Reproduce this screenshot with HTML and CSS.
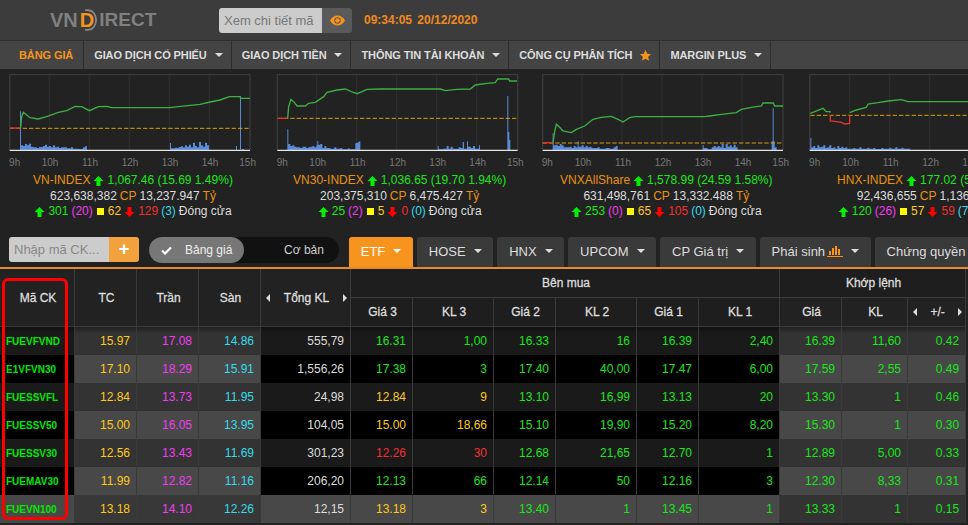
FILE: index.html
```html
<!DOCTYPE html>
<html lang="vi">
<head>
<meta charset="utf-8">
<title>VNDIRECT - Bảng giá</title>
<link rel="stylesheet" href="styles.css">
</head>
<body>
<header class="topbar">
  <div class="logo">
    <span>VN</span><span class="logo-d">D<svg class="logo-arc" viewBox="0 0 14 20"><path d="M3 1h2c5 0 8 4 8 9s-3 9-8 9H3" fill="none" stroke="#8a8a8a" stroke-width="1.6"/></svg></span><span class="logo-rest">IRECT</span>
  </div>
  <div class="lookup">
    <span class="lookup-text">Xem chi tiết mã</span>
    <span class="lookup-btn"><svg width="15" height="11" viewBox="0 0 15 11"><path d="M0 5.5C2 2 4.500 .5 7.500 .5S13 2 15 5.500C13 9 10.500 10.500 7.500 10.500S2 9 0 5.500Z" fill="#f7941d"/><circle cx="7.500" cy="5.500" r="3.200" fill="#5a5a5a"/><circle cx="7.500" cy="5.500" r="2.200" fill="#f7941d"/></svg></span>
  </div>
  <div class="clock">09:34:05 20/12/2020</div>
</header>

<nav class="mainnav">
  <a class="nav-item nav-active">BẢNG GIÁ</a>
  <a class="nav-item">GIAO DỊCH CỔ PHIẾU <i class="caret"></i></a>
  <a class="nav-item">GIAO DỊCH TIỀN <i class="caret"></i></a>
  <a class="nav-item">THÔNG TIN TÀI KHOẢN <i class="caret"></i></a>
  <a class="nav-item">CÔNG CỤ PHÂN TÍCH <svg class="star" width="11" height="11" viewBox="0 0 24 24"><path d="M12 0l3.700 8 8.300 1-6.100 5.700 1.600 8.800L12 19l-7.500 4.500 1.600-8.800L0 9l8.300-1z" fill="#f7941d"/></svg></a>
  <a class="nav-item">MARGIN PLUS <i class="caret"></i></a>
</nav>

<section class="indices">
  <article class="index">
    <svg class="chart" viewBox="27 12 726 282">
      <path class="frame" d="M29 241V14H750V241"/>
      <path class="grid" d="M148 14V241M268 14V241M388 14V241M508 14V241M628 14V241"/>
      <path class="bars" d="M60 240V124h3V226h6V228h6V222h6V226h6V221h6V230h6V232h12V234h6V231h12V228h6V224h6V230h6V228h6V232h6V226h6V232h6V230h6V234h6V232h18V235h12V232h6V236h18V237h12V232h6V229h6V240H510V219h3V235h12V233h12V231h6V229h6V232h6V226h6V230h6V224h6V232h6V218h6V228h6V232h6V216h6V226h6V230h6V218h6V226h6V240H708V228h3V240H720V78h3V240H726V237h6V240Z"/>
      <path class="dash" d="M30 175H750"/>
      <path class="line-r" d="M30 174H62"/>
      <path class="line-g" d="M62 174L65 140L70 127L80 135L90 143L115 147L140 140L175 127L200 122L225 109L245 110L268 122L295 110L320 109L335 113H510L535 110L600 103L630 96L660 90L688 80H720L722 85H750"/>
      <path class="base" d="M29 241H750"/>
      <g class="ticks"><text x="44" y="288">9h</text><text x="150" y="288">10h</text><text x="270" y="288">11h</text><text x="390" y="288">12h</text><text x="510" y="288">13h</text><text x="630" y="288">14h</text><text x="743" y="288">15h</text></g>
    </svg>
    <div class="stats">
      <p><span class="o">VN-INDEX</span> <svg class="ar" viewBox="0 0 10 10"><path class="up" d="M5 0l5 5H7v5H3V5H0z"/></svg> <span class="g">1,067.46 (15.69 1.49%)</span></p>
      <p><span class="w">623,638,382</span> <span class="o">CP</span> <span class="w">13,237.947</span> <span class="o">Tỷ</span></p>
      <p><svg class="ar" viewBox="0 0 10 10"><path class="up" d="M5 0l5 5H7v5H3V5H0z"/></svg> <span class="g">301</span> <span class="m">(20)</span> <i class="sq"></i> <span class="y">62</span> <svg class="ar" viewBox="0 0 10 10"><path class="dn" d="M5 10L0 5h3V0h4v5h3z"/></svg> <span class="r">129</span> <span class="c">(3)</span> <span class="w">Đóng cửa</span></p>
    </div>
  </article>

  <article class="index">
    <svg class="chart" viewBox="17 12 726 282">
      <path class="frame" d="M21 241V14H742V241"/>
      <path class="grid" d="M139 14V241M259 14V241M379 14V241M499 14V241M619 14V241"/>
      <path class="bars" d="M51 240V178h3V222h6V228h6V226h6V230h6V232h12V234h6V230h12V234h6V232h6V230h6V228h6V232h6V226h3V213h3V224h6V222h6V234h6V228h6V234h12V236h12V232h6V236h12V234h6V238h18V234h3V238h18V220h4V218h4V216h4V214h3V240H502V228h3V238h12V236h12V228h6V236h6V230h6V236h18V232h6V234h6V216h4V236h9V214h3V230h9V234h6V228h6V236h12V226h3V240H711V78h3V186h3V210h3V240Z"/>
      <path class="dash" d="M22 145H742"/>
      <path class="line-r" d="M22 145H52"/>
      <path class="line-g" d="M52 145L55 110L62 88L70 95L80 108H105L115 100L135 97L160 80L170 67L200 60L225 57L245 66L260 71L275 65L290 58L330 57H510L525 62L560 58L600 57L615 45L650 40L675 38L682 27H715L718 33H740"/>
      <path class="base" d="M21 241H742"/>
      <g class="ticks"><text x="36" y="288">9h</text><text x="142" y="288">10h</text><text x="262" y="288">11h</text><text x="382" y="288">12h</text><text x="502" y="288">13h</text><text x="622" y="288">14h</text><text x="735" y="288">15h</text></g>
    </svg>
    <div class="stats">
      <p><span class="o">VN30-INDEX</span> <svg class="ar" viewBox="0 0 10 10"><path class="up" d="M5 0l5 5H7v5H3V5H0z"/></svg> <span class="g">1,036.65 (19.70 1.94%)</span></p>
      <p><span class="w">203,375,310</span> <span class="o">CP</span> <span class="w">6,475.427</span> <span class="o">Tỷ</span></p>
      <p><svg class="ar" viewBox="0 0 10 10"><path class="up" d="M5 0l5 5H7v5H3V5H0z"/></svg> <span class="g">25</span> <span class="m">(2)</span> <i class="sq"></i> <span class="y">5</span> <svg class="ar" viewBox="0 0 10 10"><path class="dn" d="M5 10L0 5h3V0h4v5h3z"/></svg> <span class="r">0</span> <span class="c">(0)</span> <span class="w">Đóng cửa</span></p>
    </div>
  </article>

  <article class="index">
    <svg class="chart" viewBox="22 12 726 282">
      <path class="frame" d="M24 241V14H745V241"/>
      <path class="grid" d="M142 14V241M262 14V241M382 14V241M502 14V241M622 14V241"/>
      <path class="bars" d="M54 240V190h3V226h6V224h6V228h6V222h6V226h6V232h18V230h6V234h6V228h6V232h6V214h3V230h9V226h6V232h6V228h6V232h6V230h6V234h18V232h6V236h18V234h12V236h12V232h6V228h6V240H504V226h3V234h12V238h12V232h6V228h6V232h6V228h6V232h6V222h6V234h6V222h6V230h6V226h6V232h6V224h6V232h6V240H711V214h3V115h3V214h3V232h6V240Z"/>
      <path class="dash" d="M24 219H745"/>
      <path class="line-r" d="M24 218H55"/>
      <path class="line-g" d="M55 218L60 185L65 163L75 172L85 183L110 188L125 178L150 168L175 148L200 142L230 139L250 148L265 156L285 143L300 140H510L525 138L560 133L605 128L620 118L650 112L680 108L685 99H716L720 108H745"/>
      <path class="base" d="M24 241H745"/>
      <g class="ticks"><text x="38" y="288">9h</text><text x="145" y="288">10h</text><text x="265" y="288">11h</text><text x="385" y="288">12h</text><text x="505" y="288">13h</text><text x="625" y="288">14h</text><text x="738" y="288">15h</text></g>
    </svg>
    <div class="stats">
      <p><span class="o">VNXAllShare</span> <svg class="ar" viewBox="0 0 10 10"><path class="up" d="M5 0l5 5H7v5H3V5H0z"/></svg> <span class="g">1,578.99 (24.59 1.58%)</span></p>
      <p><span class="w">631,498,761</span> <span class="o">CP</span> <span class="w">13,332.488</span> <span class="o">Tỷ</span></p>
      <p><svg class="ar" viewBox="0 0 10 10"><path class="up" d="M5 0l5 5H7v5H3V5H0z"/></svg> <span class="g">253</span> <span class="m">(0)</span> <i class="sq"></i> <span class="y">65</span> <svg class="ar" viewBox="0 0 10 10"><path class="dn" d="M5 10L0 5h3V0h4v5h3z"/></svg> <span class="r">105</span> <span class="c">(0)</span> <span class="w">Đóng cửa</span></p>
    </div>
  </article>

  <article class="index">
    <svg class="chart" viewBox="33 12 726 282">
      <path class="frame" d="M35 241V14H756V241"/>
      <path class="grid" d="M155 14V241M275 14V241M395 14V241M515 14V241M635 14V241"/>
      <path class="bars" d="M37 240V204h3V232h6V228h6V234h6V226h6V232h6V230h6V226h6V234h6V232h6V226h6V234h6V232h6V236h6V228h6V234h6V230h6V234h6V232h6V236h18V234h6V236h12V232h6V236h18V233h6V236h12V234h6V237h18V234h6V236h18V233h6V236h12V232h6V236h12V233h6V236H337V240Z"/>
      <path class="dash" d="M37 136H756"/>
      <path class="line-g" d="M37 130L50 125L75 115L85 125H96V128"/>
      <path class="line-r" d="M97 136V153L115 155L130 157L140 162L155 160V136"/>
      <path class="line-g" d="M155 128L175 120L205 112L210 102L240 98L270 93L310 89L330 95H756"/>
      <path class="base" d="M35 241H756"/>
      <g class="ticks"><text x="50" y="288">9h</text><text x="158" y="288">10h</text><text x="278" y="288">11h</text><text x="398" y="288">12h</text><text x="518" y="288">13h</text></g>
    </svg>
    <div class="stats">
      <p><span class="o">HNX-INDEX</span> <svg class="ar" viewBox="0 0 10 10"><path class="up" d="M5 0l5 5H7v5H3V5H0z"/></svg> <span class="g">177.02 (5.28 3.07%)</span></p>
      <p><span class="w">92,436,655</span> <span class="o">CP</span> <span class="w">1,136.412</span> <span class="o">Tỷ</span></p>
      <p><svg class="ar" viewBox="0 0 10 10"><path class="up" d="M5 0l5 5H7v5H3V5H0z"/></svg> <span class="g">120</span> <span class="m">(26)</span> <i class="sq"></i> <span class="y">57</span> <svg class="ar" viewBox="0 0 10 10"><path class="dn" d="M5 10L0 5h3V0h4v5h3z"/></svg> <span class="r">59</span> <span class="c">(7)</span> <span class="w">Đóng cửa</span></p>
    </div>
  </article>
</section>

<section class="toolbar">
  <div class="code-box">
    <span class="code-input">Nhập mã CK...</span>
    <span class="code-add">+</span>
  </div>
  <div class="toggle">
    <span class="toggle-on"><svg width="11" height="9" viewBox="0 0 11 9"><path d="M1 4.500L4 7.500L10 1.500" fill="none" stroke="#fff" stroke-width="2.200"/></svg><b>Bảng giá</b></span>
    <span class="toggle-off">Cơ bản</span>
  </div>
  <div class="tabs">
    <a class="tab tab-active">ETF <i class="caret caret-w"></i></a>
    <a class="tab">HOSE <i class="caret"></i></a>
    <a class="tab">HNX <i class="caret"></i></a>
    <a class="tab">UPCOM <i class="caret"></i></a>
    <a class="tab">CP Giá trị <i class="caret"></i></a>
    <a class="tab">Phái sinh <svg class="bars-ic" width="16" height="12" viewBox="0 0 16 12"><path d="M2 6h2v4H2zM5 3h2v7H5zM8 1h2v9H8zM11 4h2v6h-2z" fill="#f7941d"/><path d="M0 11.500H16" stroke="#f7941d"/></svg> <i class="caret"></i></a>
    <a class="tab">Chứng quyền <i class="caret"></i></a>
  </div>
</section>

<main class="board">
  <table class="prices">
    <colgroup>
      <col class="c75"><col class="c62"><col class="c62"><col class="c62"><col class="c90"><col class="c62"><col class="c81"><col class="c62"><col class="c81"><col class="c62"><col class="c81"><col class="c62"><col class="c66"><col class="c58">
    </colgroup>
    <thead>
      <tr>
        <th rowspan="2">Mã CK</th>
        <th rowspan="2">TC</th>
        <th rowspan="2">Trần</th>
        <th rowspan="2">Sàn</th>
        <th rowspan="2"><span class="arrows"><i class="tri-l"></i>Tổng KL<i class="tri-r"></i></span></th>
        <th colspan="6" class="band">Bên mua</th>
        <th colspan="3" class="band">Khớp lệnh</th>
      </tr>
      <tr>
        <th>Giá 3</th><th>KL 3</th><th>Giá 2</th><th>KL 2</th><th>Giá 1</th><th>KL 1</th><th>Giá</th><th>KL</th>
        <th><span class="arrows"><i class="tri-l"></i>+/-<i class="tri-r"></i></span></th>
      </tr>
    </thead>
    <tbody>
      <tr><td class="sym">FUEVFVND</td><td class="ref y">15.97</td><td class="ref m">17.08</td><td class="ref c">14.86</td><td class="w">555,79</td><td class="g">16.31</td><td class="g">1,00</td><td class="g">16.33</td><td class="g">16</td><td class="g">16.39</td><td class="g">2,40</td><td class="ref g">16.39</td><td class="ref g">11,60</td><td class="ref g">0.42</td></tr>
      <tr><td class="sym">E1VFVN30</td><td class="ref y">17.10</td><td class="ref m">18.29</td><td class="ref c">15.91</td><td class="w">1,556,26</td><td class="g">17.38</td><td class="g">3</td><td class="g">17.40</td><td class="g">40,00</td><td class="g">17.47</td><td class="g">6,00</td><td class="ref g">17.59</td><td class="ref g">2,55</td><td class="ref g">0.49</td></tr>
      <tr><td class="sym">FUESSVFL</td><td class="ref y">12.84</td><td class="ref m">13.73</td><td class="ref c">11.95</td><td class="w">24,98</td><td class="y">12.84</td><td class="y">9</td><td class="g">13.10</td><td class="g">16,99</td><td class="g">13.13</td><td class="g">20</td><td class="ref g">13.30</td><td class="ref g">1</td><td class="ref g">0.46</td></tr>
      <tr><td class="sym">FUESSV50</td><td class="ref y">15.00</td><td class="ref m">16.05</td><td class="ref c">13.95</td><td class="w">104,05</td><td class="y">15.00</td><td class="y">18,66</td><td class="g">15.10</td><td class="g">19,90</td><td class="g">15.20</td><td class="g">8,20</td><td class="ref g">15.30</td><td class="ref g">1</td><td class="ref g">0.30</td></tr>
      <tr><td class="sym">FUESSV30</td><td class="ref y">12.56</td><td class="ref m">13.43</td><td class="ref c">11.69</td><td class="w">301,23</td><td class="r">12.26</td><td class="r">30</td><td class="g">12.68</td><td class="g">21,65</td><td class="g">12.70</td><td class="g">1</td><td class="ref g">12.89</td><td class="ref g">5,00</td><td class="ref g">0.33</td></tr>
      <tr><td class="sym">FUEMAV30</td><td class="ref y">11.99</td><td class="ref m">12.82</td><td class="ref c">11.16</td><td class="w">206,20</td><td class="g">12.13</td><td class="g">66</td><td class="g">12.14</td><td class="g">50</td><td class="g">12.16</td><td class="g">3</td><td class="ref g">12.30</td><td class="ref g">8,33</td><td class="ref g">0.31</td></tr>
      <tr class="hover"><td class="sym">FUEVN100</td><td class="ref y">13.18</td><td class="ref m">14.10</td><td class="ref c">12.26</td><td class="w">12,15</td><td class="y">13.18</td><td class="y">3</td><td class="g">13.40</td><td class="g">1</td><td class="g">13.45</td><td class="g">1</td><td class="ref g">13.33</td><td class="ref g">1</td><td class="ref g">0.15</td></tr>
    </tbody>
  </table>
  <div class="highlight"></div>
</main>
</body>
</html>
```

FILE: styles.css
```css
* { box-sizing: border-box; }
html, body { margin: 0; height: 525px; overflow: hidden; }
body {
  width: 968px;
  background: #222;
  color: #ddd;
  font: 12px "Liberation Sans", Arial, sans-serif;
  position: relative;
}
p { margin: 0; }
i { font-style: normal; }

/* top bar */
.topbar {
  height: 40px;
  background: #3c3c3c;
  display: flex;
  align-items: center;
}
.logo {
  flex: none;
  width: 219px;
  padding-left: 50px;
  display: flex;
  color: #808080;
  font-size: 20px;
  line-height: 24px;
  font-weight: bold;
}
.logo-d {
  color: #f7941d;
  position: relative;
  margin: 0 5px 0 2px;
}
.logo-arc {
  position: absolute;
  left: 0;
  top: 1px;
  width: 19px;
  height: 22px;
}
.logo-rest { font-size: 19px; }
.lookup {
  flex: none;
  width: 133px;
  height: 25px;
  display: flex;
  border-radius: 3px;
  overflow: hidden;
}
.lookup-text {
  width: 103px;
  background: #ccc;
  color: #777;
  font-size: 13px;
  line-height: 25px;
  padding-left: 5px;
  white-space: nowrap;
}
.lookup-btn {
  width: 30px;
  background: #5a5a5a;
  display: flex;
  align-items: center;
  justify-content: center;
}
.clock {
  margin-left: 12px;
  color: #f08a1d;
  font-weight: bold;
  font-size: 12px;
  word-spacing: 2px;
  white-space: nowrap;
}

/* navigation */
.mainnav {
  height: 30px;
  background: #444;
  border-top: 1px solid #2e2e2e;
  border-bottom: 1px solid #222;
  display: flex;
}
.nav-item {
  display: flex;
  align-items: center;
  gap: 5px;
  padding: 0 8px 0 10px;
  border-right: 1px solid #2e2e2e;
  font-size: 11px;
  font-weight: bold;
  letter-spacing: -.1px;
  color: #ddd;
  white-space: nowrap;
}
.nav-active { color: #f7941d; padding: 0 10px 0 19px; }
.caret {
  display: inline-block;
  flex: none;
  width: 0;
  height: 0;
  margin-left: 3px;
  border-left: 4px solid transparent;
  border-right: 4px solid transparent;
  border-top: 4px solid #ddd;
}
.caret-w { border-top-color: #fff; }
.star { margin-left: 3px; }

/* index charts */
.indices {
  height: 163px;
  padding: 4px 0 0 9px;
  display: flex;
  overflow: hidden;
}
.index {
  flex: 0 0 266.67px;
}
.chart {
  display: block;
  width: 242px;
  height: 94px;
  overflow: visible;
}
.frame { fill: none; stroke: #3a3a3a; stroke-width: 4; }
.grid { fill: none; stroke: #363636; stroke-width: 2; }
.bars { fill: #5b8ad6; }
.dash { fill: none; stroke: #d8a208; stroke-width: 3; stroke-dasharray: 13 6; }
.line-g { fill: none; stroke: #3cb043; stroke-width: 4; }
.line-r { fill: none; stroke: #e8322e; stroke-width: 4; }
.base { fill: none; stroke: #e4e4e4; stroke-width: 4; }
.ticks text { fill: #777; font-size: 30px; text-anchor: middle; }

.stats {
  width: 242px;
  margin: 5px 0 0 3px;
  white-space: nowrap;
  line-height: 15.5px;
}
.stats p { display: flex; justify-content: center; gap: 3px; align-items: center; }
.ar { width: 11px; height: 10px; flex: none; }
.up { fill: #00f000; }
.dn { fill: #f00; }
.sq { width: 7px; height: 7px; margin: 0 1px; background: #ff0; flex: none; }
.o { color: #e8920c; }
.g { color: #19e619; }
.w { color: #ddd; }
.m { color: #f23cf2; }
.y { color: #ffc916; }
.r { color: #f03030; }
.c { color: #35dcea; }

/* toolbar */
.toolbar {
  height: 36px;
  padding: 4px 0 0 9px;
  display: flex;
  align-items: flex-start;
  border-bottom: 2px solid #e8892c;
  overflow: hidden;
}
.code-box {
  flex: none;
  width: 130px;
  height: 25px;
  display: flex;
  border-radius: 3px;
  overflow: hidden;
}
.code-input {
  width: 100px;
  background: #ccc;
  color: #888;
  font-size: 13px;
  line-height: 25px;
  padding-left: 5px;
  white-space: nowrap;
}
.code-add {
  width: 30px;
  background: #f2a23c;
  color: #fff;
  font-size: 19px;
  font-weight: bold;
  line-height: 24px;
  text-align: center;
}
.toggle {
  flex: none;
  width: 190px;
  height: 26px;
  margin-left: 10px;
  border-radius: 13px;
  background: #111;
  display: flex;
  align-items: center;
}
.toggle-on {
  width: 95px;
  height: 26px;
  border-radius: 13px;
  background: #777;
  display: flex;
  align-items: center;
  padding-left: 12px;
  gap: 13px;
  color: #eee;
}
.toggle-on b { font-weight: normal; }
.toggle-off {
  flex: 1;
  padding-left: 25px;
  text-align: center;
  color: #ccc;
}
.tabs {
  flex: none;
  margin-left: 10px;
  display: flex;
  gap: 4px;
}
.tab {
  height: 30px;
  padding: 0 11.75px 2px;
  border-radius: 3px 3px 0 0;
  background: #3a3a3a;
  color: #ddd;
  font-size: 13px;
  display: flex;
  align-items: center;
  gap: 5px;
  white-space: nowrap;
}
.tab-active { background: #f7941d; color: #fff; }
.bars-ic { flex: none; margin-left: -3px; }

/* price table */
.board { position: relative; }
.prices {
  width: 966px;
  table-layout: fixed;
  border-collapse: separate;
  border-spacing: 0;
}
.c75 { width: 75px; }
.c62 { width: 62px; }
.c90 { width: 90px; }
.c81 { width: 81px; }
.c66 { width: 66px; }
.c58 { width: 58px; }
.prices th {
  height: 29px;
  background: #222;
  border-right: 1px solid #3a3a3a;
  border-bottom: 1px solid #3a3a3a;
  font-size: 12px;
  font-weight: normal;
  -webkit-text-stroke: .3px #ddd;
  color: #ddd;
  padding: 0 0 0 2px;
}
.prices th.band { background: #1e1e1e; }
.prices thead tr + tr th { background: #1e1e1e; }
.prices thead tr + tr th:nth-child(n+7) { background: #222; }
.arrows {
  display: flex;
  align-items: center;
  justify-content: space-between;
  padding: 0 3px;
}
.tri-l, .tri-r {
  width: 0;
  height: 0;
  border-top: 4px solid transparent;
  border-bottom: 4px solid transparent;
}
.tri-l { border-right: 4px solid #ddd; }
.tri-r { border-left: 4px solid #ddd; }
.prices td {
  height: 28px;
  padding: 0 6px;
  text-align: right;
  font-size: 12px;
  background: #1a1a1a;
  border-right: 1px solid #3a3a3a;
  white-space: nowrap;
}
.prices tr:nth-child(even) td { background: #000; }
.prices tr td.ref { background: #333; }
.prices tr:nth-child(even) td.ref { background: #484848; }
.prices tbody tr:first-child td {
  background-image: linear-gradient(rgba(0, 0, 0, .35), transparent 7px);
}
.prices td.sym {
  text-align: left;
  font-size: 10px;
  font-weight: bold;
  color: #00e800;
}
.prices tr.hover td { background: #484848; }
.prices tr.hover td.ref { background: #383838; }
.prices tr.hover td:nth-child(n+12) { background: #333; }
.highlight {
  position: absolute;
  left: 2px;
  top: 9px;
  width: 66px;
  height: 242px;
  border: 3px solid #f00;
  border-radius: 6px;
}
```
